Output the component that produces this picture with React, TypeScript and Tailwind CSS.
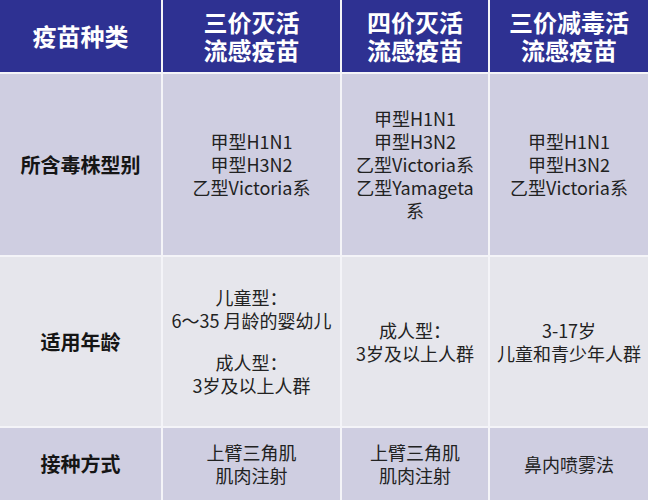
import React from 'react';

type Row = {
  label: string;
  bg: string;
  cells: string[][];
};

const headers = ['疫苗种类', '三价灭活\n流感疫苗', '四价灭活\n流感疫苗', '三价减毒活\n流感疫苗'];

const rows: Row[] = [
  {
    label: '所含毒株型别',
    bg: 'bg-[#cfcee1]',
    cells: [
      ['甲型H1N1', '甲型H3N2', '乙型Victoria系'],
      ['甲型H1N1', '甲型H3N2', '乙型Victoria系', '乙型Yamageta', '系'],
      ['甲型H1N1', '甲型H3N2', '乙型Victoria系'],
    ],
  },
  {
    label: '适用年龄',
    bg: 'bg-[#e6e6ec]',
    cells: [
      ['儿童型：', '6～35 月龄的婴幼儿', '', '成人型：', '3岁及以上人群'],
      ['成人型：', '3岁及以上人群'],
      ['3-17岁', '儿童和青少年人群'],
    ],
  },
  {
    label: '接种方式',
    bg: 'bg-[#cfcee1]',
    cells: [
      ['上臂三角肌', '肌肉注射'],
      ['上臂三角肌', '肌肉注射'],
      ['鼻内喷雾法'],
    ],
  },
];

const App: React.FC = () => {
  return (
    <div
      className="w-[648px] h-[500px] overflow-hidden bg-[#f4f4f8] grid grid-cols-[161px_177px_146px_158px] grid-rows-[72px_181px_169px_72px] gap-[2px]"
      style={{ fontFamily: '"Noto Sans CJK SC", "Noto Sans", sans-serif' }}
    >
      {headers.map((h) => (
        <div
          key={h}
          className="bg-[#2e3192] flex items-center justify-center text-center text-white font-bold text-[24px] leading-[28px] whitespace-pre-line"
        >
          {h}
        </div>
      ))}

      {rows.map((row) => (
        <React.Fragment key={row.label}>
          <div
            className={`${row.bg} flex items-center justify-center text-[20px] font-bold text-[#151515]`}
          >
            {row.label}
          </div>
          {row.cells.map((lines, i) => (
            <div
              key={i}
              className={`${row.bg} flex flex-col items-center justify-center text-center text-[18px] leading-[23px] text-[#222222]`}
            >
              {lines.map((line, j) =>
                line === '' ? (
                  <div key={j} className="h-[19px]" />
                ) : (
                  <div key={j}>{line}</div>
                )
              )}
            </div>
          ))}
        </React.Fragment>
      ))}
    </div>
  );
};

export default App;
